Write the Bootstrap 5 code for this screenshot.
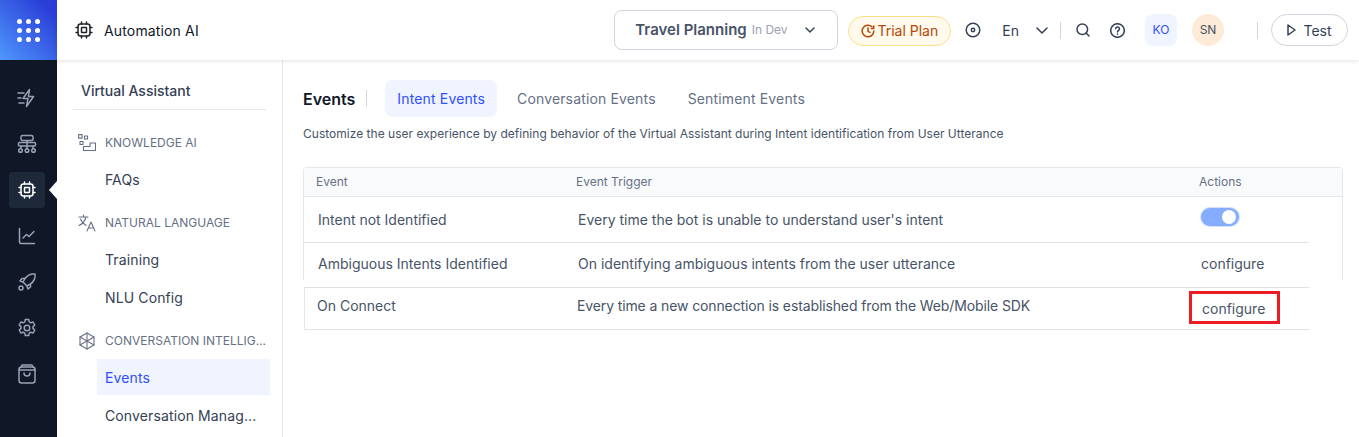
<!DOCTYPE html>
<html lang="en">
<head>
    <meta charset="UTF-8">
    <meta name="viewport" content="width=device-width, initial-scale=1.0">
    <link href="https://cdn.jsdelivr.net/npm/bootstrap@5.3.0/dist/css/bootstrap.min.css" rel="stylesheet">
    <title>Events</title>
    <style>
        html, body { height: 437px; overflow: hidden; }
        body { font-family: Inter, "Noto Sans", sans-serif; background: #fff; color: #344054; font-size: 14px; }
        svg { display: block; fill: none; stroke: currentColor; stroke-width: 1.5; stroke-linecap: round; stroke-linejoin: round; flex: none; }

        .app-shell { height: 437px; }
        .rail { width: 57px; background: #101828; color: #98a2b3; }
        .rail-logo { height: 60px; background: linear-gradient(45deg, #4f97fd 0%, #2a3fd8 85%); }
        .dots { display: grid; grid-template-columns: repeat(3, 5px); gap: 4px; }
        .dots i { width: 5px; height: 5px; border-radius: 50%; background: #fff; }
        .rail-list { padding: 20px 0 0 9px; gap: 10px; }
        .rail-btn { width: 36px; height: 36px; border-radius: 4px; }
        .rail-btn.on { background: #1d2939; color: #fff; }
        .rail-pointer { position: absolute; left: 40px; top: 9px; width: 0; height: 0; border-style: solid; border-width: 9px 8px 9px 0; border-color: transparent #fff transparent transparent; }

        .topbar { height: 60px; padding: 0 11px 0 18px; box-shadow: 0 1px 4px rgba(16, 24, 40, .12); position: relative; z-index: 2; background: #fff; }
        .prod-name { font-weight: 400; letter-spacing: .15px; font-size: 14px; color: #101828; margin-left: 11px; }
        .app-pick { width: 224px; height: 40px; border: 1px solid #d0d5dd; border-radius: 8px; padding: 0 22px 0 20px; color: #344054; }
        .app-pick b { font-weight: 600; font-size: 15px; color: #475467; }
        .app-pick span { font-size: 12px; color: #98a2b3; margin-left: 5px; }
        .trial { width: 103px; height: 30px; margin-left: 10px; border: 1px solid #fedf89; background: #fffaeb; border-radius: 15px; color: #b54708; font-size: 14px; gap: 2px; margin-top: 1px; }
        .top-ico { color: #344054; }
        .vsep { width: 1px; height: 17px; background: #d0d5dd; }
        .avatar { width: 32px; height: 32px; font-size: 12px; }
        .av-ko { background: #eff4ff; color: #304ffe; border-radius: 8px; }
        .av-sn { background: #fdead7; color: #475467; border-radius: 50%; }
        .test-btn { width: 77px; height: 32px; border: 1px solid #d0d5dd; border-radius: 16px; font-size: 14px; color: #344054; gap: 7px; }

        .side { width: 226px; border-right: 1px solid #e4e7ec; padding: 0 16px; overflow: hidden; flex: none; }
        .side-title { height: 50px; padding: 20px 0 0 8px; border-bottom: 1px solid #e4e7ec; font-size: 14px; font-weight: 500; color: #344054; }
        .sec-head { height: 20px; font-size: 12px; color: #667085; gap: 9px; padding-left: 5px; white-space: nowrap; }
        .sec-head svg { color: #667085; stroke-width: 1.1; }
        .side-link { display: block; height: 36px; line-height: 36px; margin: 0 -4px 2px 24px; padding-left: 8px; font-size: 14px; font-weight: 400; letter-spacing: .12px; color: #344054; text-decoration: none; white-space: nowrap; }
        .side-link.low { line-height: 38px; }
        .side-link.on { background: #eff4ff; color: #304ffe; }

        .page { padding: 20px 16px 0 20px; }
        .page-name { font-size: 16px; font-weight: 600; color: #101828; padding-right: 12px; margin-right: 18px; position: relative; }
        .page-name::after { content: ""; position: absolute; right: 0; top: 3px; width: 1px; height: 17px; background: #d0d5dd; }
        .tab-item { height: 37px; line-height: 37px; padding: 0 12px; border-radius: 8px; font-size: 14px; font-weight: 400; letter-spacing: .15px; color: #667085; text-decoration: none; margin-right: 8px; }
        .tab-item.on { background: #eff4ff; color: #304ffe; }
        .page-desc { font-size: 12px; letter-spacing: .017px; color: #475467; margin: 8px 0 0; line-height: 18px; }

        .ev-box { height: 113px; margin-top: 24px; border: 1px solid #e4e7ec; border-bottom: 0; border-radius: 4px 4px 0 0; }
        .ev-head { height: 29px; background: #f9fafb; border-bottom: 1px solid #e4e7ec; font-size: 12px; color: #667085; padding-left: 12px; }
        .ev-row { width: 1005px; border-bottom: 1px solid #e0e3e8; font-size: 14px; color: #475467; padding-left: 14px; background: #fff; }
        .ev-row.r1 { height: 46px; }
        .ev-row.r2 { height: 45px; padding-bottom: 3px; }
        .ev-row.r3 { width: 1006px; height: 42px; margin: 8px 0 0 1px; padding: 7px 0 0 12px; border-left: 1px solid #e4e7ec; align-items: flex-start !important; }
        .c-name { width: 260px; flex: none; }
        .c-trig { width: 623px; flex: none; }
        .r3 .c-trig { letter-spacing: -.12px; }
        .ev-switch { width: 38px; height: 18px; margin-top: -5px; border-radius: 9px; background: #84adff; box-shadow: 0 0 0 1px #d1e0ff; padding: 2px 3px; display: flex; justify-content: flex-end; }
        .ev-switch i { width: 14px; height: 14px; background: #fff; border-radius: 50%; }
        .marked { outline: 3px solid #ed1c24; padding: 4px 12px 2px 10px; margin: -1px 0 0 -8px; }
    </style>
</head>
<body>
    <div class="app-shell d-flex">
        <aside class="rail d-flex flex-column flex-shrink-0">
            <div class="rail-logo d-flex align-items-center justify-content-center">
                <div class="dots"><i></i><i></i><i></i><i></i><i></i><i></i><i></i><i></i><i></i></div>
            </div>
            <div class="rail-list d-flex flex-column align-items-start">
                <div class="rail-btn d-flex align-items-center justify-content-center">
                    <svg width="20" height="20" viewBox="0 0 20 20"><path d="M12.500 1.500 6 10.500h5l-1.500 8 7-10h-5l1-7Z"/><path d="M1 5h6M1 10h3M2 15h5"/></svg>
                </div>
                <div class="rail-btn d-flex align-items-center justify-content-center">
                    <svg width="20" height="20" viewBox="0 0 20 20"><rect x="4" y="1.500" width="12" height="5" rx="1.500"/><rect x="1.500" y="8.500" width="17" height="3.500" rx="1"/><path d="M4 12v2.500M10 6.500v8M16 12v2.500"/><circle cx="3.500" cy="16.500" r="1.800"/><circle cx="10" cy="16.500" r="1.800"/><circle cx="16.500" cy="16.500" r="1.800"/></svg>
                </div>
                <div class="position-relative">
                    <div class="rail-btn on d-flex align-items-center justify-content-center">
                        <svg width="18" height="18" viewBox="0 0 18 18" stroke-width="2"><rect x="3" y="3" width="12" height="12" rx="2.500"/><rect x="6.500" y="6.500" width="5" height="5" rx=".5"/><path d="M6.500 1v2M11.500 1v2M6.500 15v2M11.500 15v2M1 6.500h2M1 11.500h2M15 6.500h2M15 11.500h2"/></svg>
                    </div>
                    <span class="rail-pointer"></span>
                </div>
                <div class="rail-btn d-flex align-items-center justify-content-center">
                    <svg width="18" height="18" viewBox="0 0 18 18"><path d="M1.500 1.500v13.500a1.500 1.500 0 0 0 1.500 1.500h13.500"/><path d="M5 11l3.500-3.500 2.500 2 5-5"/></svg>
                </div>
                <div class="rail-btn d-flex align-items-center justify-content-center">
                    <svg width="20" height="20" viewBox="0 0 20 20"><path d="M18 2c-4-.5-7.500 1-10 4.500L6 10l4 4 3.500-2C17 9.500 18.500 6 18 2Z"/><path d="M8 6.500H5L3 9l3 1M13.500 12v3l-2.500 2-1-3"/><circle cx="4" cy="16" r="2"/></svg>
                </div>
                <div class="rail-btn d-flex align-items-center justify-content-center">
                    <svg width="20" height="20" viewBox="0 0 20 20"><circle cx="10" cy="10" r="2.800"/><path d="M8.300 1.500h3.400l.5 2.400 1.600.9 2.300-.8 1.700 3-1.800 1.600v1.800l1.800 1.600-1.700 3-2.300-.8-1.600.9-.5 2.400H8.300l-.5-2.400-1.600-.9-2.300.8-1.700-3 1.800-1.600V8.600L2.200 7l1.700-3 2.300.8 1.600-.9.500-2.400Z"/></svg>
                </div>
                <div class="rail-btn d-flex align-items-center justify-content-center">
                    <svg width="18" height="20" viewBox="0 0 18 20"><rect x="1" y="3" width="16" height="16" rx="2.500"/><path d="M3 3l1-2h10l1 2M1 6h16M6 9c0 4 6 4 6 0"/></svg>
                </div>
            </div>
        </aside>

        <div class="flex-grow-1 d-flex flex-column">
            <header class="topbar d-flex align-items-center">
                <svg class="text-dark" width="18" height="18" viewBox="0 0 18 18" stroke-width="1.800"><rect x="3" y="3" width="12" height="12" rx="2.500"/><rect x="6.500" y="6.500" width="5" height="5" rx=".5"/><path d="M6.500 1v2M11.500 1v2M6.500 15v2M11.500 15v2M1 6.500h2M1 11.500h2M15 6.500h2M15 11.500h2"/></svg>
                <span class="prod-name">Automation AI</span>

                <div class="app-pick d-flex align-items-center ms-auto">
                    <b>Travel Planning</b><span>In Dev</span>
                    <svg class="ms-auto" width="10" height="6" viewBox="0 0 10 6"><path d="M1 1l4 4 4-4"/></svg>
                </div>
                <div class="trial d-flex align-items-center justify-content-center">
                    <svg width="14" height="14" viewBox="0 0 14 14" stroke-width="1.400"><path d="M12.800 7A5.800 5.800 0 1 1 11 2.800"/><path d="M7 4v3.300l2 1"/><path d="M12.800 2v2.500h-2.300"/></svg>
                    Trial Plan
                </div>
                <svg class="top-ico" style="margin-left:14px" width="16" height="16" viewBox="0 0 16 16" stroke-width="1.300"><circle cx="8" cy="8" r="6.800"/><circle cx="8" cy="8" r="1.700"/></svg>
                <span class="top-ico" style="margin-left:21px">En</span>
                <svg class="top-ico" style="margin-left:17px" width="12" height="7" viewBox="0 0 12 7" stroke-width="1.200"><path d="M1 1l5 5 5-5"/></svg>
                <span class="vsep" style="margin-left:12px"></span>
                <svg class="top-ico" style="margin-left:15px" width="14" height="14" viewBox="0 0 14 14" stroke-width="1.300"><circle cx="6.300" cy="6.300" r="5.300"/><path d="M10.300 10.300 13 13"/></svg>
                <svg class="top-ico" style="margin-left:20px" width="15" height="15" viewBox="0 0 15 15" stroke-width="1.100"><circle cx="7.500" cy="7.500" r="6.800"/><path d="M5.700 5.800a1.900 1.900 0 1 1 2.800 1.700c-.7.400-1 .8-1 1.500"/><path d="M7.500 11v.2"/></svg>
                <div class="avatar av-ko d-flex align-items-center justify-content-center" style="margin-left:20px">KO</div>
                <div class="avatar av-sn d-flex align-items-center justify-content-center" style="margin-left:15px">SN</div>
                <span class="vsep" style="margin-left:33px"></span>
                <div class="test-btn d-flex align-items-center justify-content-center" style="margin-left:13px">
                    <svg width="9" height="12" viewBox="0 0 9 12" stroke-width="1"><path d="M1 1l7 5-7 5Z"/></svg>
                    Test
                </div>
            </header>

            <div class="d-flex flex-grow-1" style="min-height:0">
                <nav class="side">
                    <div class="side-title">Virtual Assistant</div>
                    <div class="sec-head d-flex align-items-center" style="margin-top:23px">
                        <svg width="18" height="18" viewBox="0 0 18 18"><rect x=".6" y=".6" width="3.500" height="3.500"/><rect x="6.500" y="2" width="3" height="3"/><rect x="2" y="7.500" width="3" height="3"/><path d="M5.500 16.500h12V9h-5.500v3.500H5.500Z"/></svg>
                        KNOWLEDGE AI
                    </div>
                    <a class="side-link" href="#" style="margin-top:9px">FAQs</a>
                    <div class="sec-head d-flex align-items-center" style="margin-top:15px">
                        <svg width="18" height="18" viewBox="0 0 18 18"><path d="M1 3h9M5.500 1v2M8 3c-1 4-3.500 7-7 8.500M2.500 5c1 3 3 5 5.500 6.500M9 17l4-9 4 9M10.500 14h5"/></svg>
                        NATURAL LANGUAGE
                    </div>
                    <a class="side-link" href="#" style="margin-top:9px">Training</a>
                    <a class="side-link" href="#">NLU Config</a>
                    <div class="sec-head d-flex align-items-center" style="margin-top:15px">
                        <svg width="18" height="18" viewBox="0 0 18 18"><path d="M9 1l7 4v8l-7 4-7-4V5l7-4Z"/><path d="M9 1v16M2 5l14 8M16 5 2 13"/></svg>
                        CONVERSATION INTELLIG...
                    </div>
                    <a class="side-link low on" href="#" style="margin-top:8px">Events</a>
                    <a class="side-link low" href="#">Conversation Manag...</a>
                </nav>

                <main class="page flex-grow-1">
                    <div class="d-flex align-items-center">
                        <span class="page-name">Events</span>
                        <a class="tab-item on" href="#">Intent Events</a>
                        <a class="tab-item" href="#">Conversation Events</a>
                        <a class="tab-item" href="#">Sentiment Events</a>
                    </div>
                    <p class="page-desc">Customize the user experience by defining behavior of the Virtual Assistant during Intent identification from User Utterance</p>

                    <div class="ev-box">
                        <div class="ev-head d-flex align-items-center">
                            <span class="c-name">Event</span>
                            <span class="c-trig">Event Trigger</span>
                            <span>Actions</span>
                        </div>
                        <div class="ev-row r1 d-flex align-items-center">
                            <span class="c-name">Intent not Identified</span>
                            <span class="c-trig">Every time the bot is unable to understand user's intent</span>
                            <span class="ev-switch"><i></i></span>
                        </div>
                        <div class="ev-row r2 d-flex align-items-center">
                            <span class="c-name">Ambiguous Intents Identified</span>
                            <span class="c-trig">On identifying ambiguous intents from the user utterance</span>
                            <span>configure</span>
                        </div>
                    </div>
                    <div class="ev-row r3 d-flex align-items-center">
                        <span class="c-name">On Connect</span>
                        <span class="c-trig">Every time a new connection is established from the Web/Mobile SDK</span>
                        <span class="marked">configure</span>
                    </div>
                </main>
            </div>
        </div>
    </div>
    <script src="https://cdn.jsdelivr.net/npm/bootstrap@5.3.0/dist/js/bootstrap.bundle.min.js"></script>
</body>
</html>
